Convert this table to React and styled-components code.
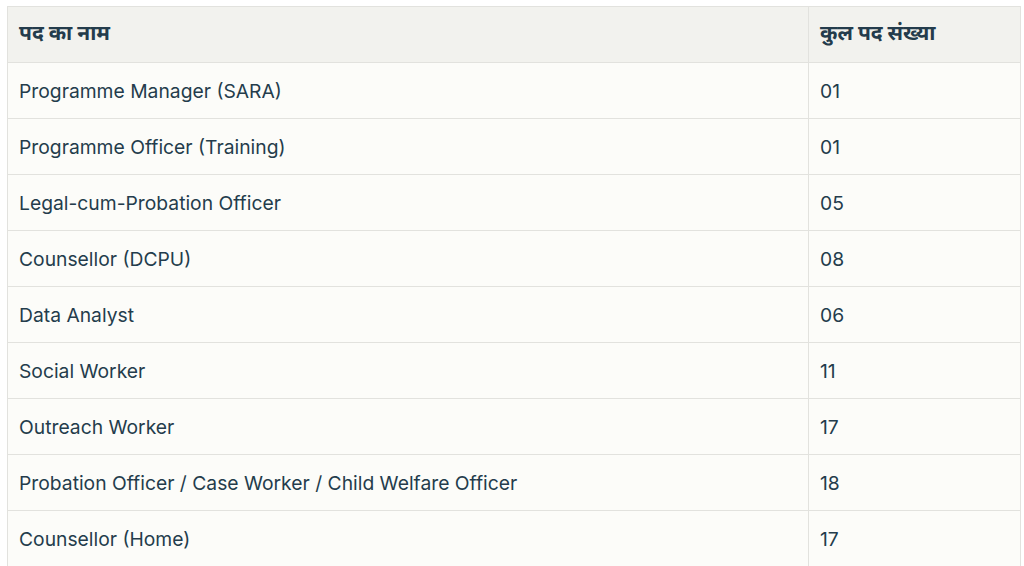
import styled, { createGlobalStyle } from "styled-components";

const GlobalStyle = createGlobalStyle`
  body {
    margin: 0;
    background: #ffffff;
  }
`;

const Wrapper = styled.div`
  padding: 6px 4px 0 7px;
`;

const Table = styled.table`
  width: 1013px;
  table-layout: fixed;
  border-collapse: collapse;
  font-family: Inter, "Noto Sans", "Liberation Sans", sans-serif;
  color: #243c4c;
  font-size: 19.3px;
`;

const HeadCell = styled.th`
  background: #f2f2ee;
  border: 1px solid #e2e2de;
  text-align: left;
  font-weight: 700;
  height: 52px;
  line-height: 26px;
  padding: 0 11px 3px;
  font-size: 21px;
`;

const Cell = styled.td`
  background: #fcfcf9;
  border: 1px solid #e2e2de;
  height: 55px;
  line-height: 24px;
  padding: 0 11px;
  font-weight: 400;
`;

const rows = [
  ["Programme Manager (SARA)", "01"],
  ["Programme Officer (Training)", "01"],
  ["Legal-cum-Probation Officer", "05"],
  ["Counsellor (DCPU)", "08"],
  ["Data Analyst", "06"],
  ["Social Worker", "11"],
  ["Outreach Worker", "17"],
  ["Probation Officer / Case Worker / Child Welfare Officer", "18"],
  ["Counsellor (Home)", "17"],
];

export default function App() {
  return (
    <>
      <GlobalStyle />
      <Wrapper>
        <Table>
          <colgroup>
            <col style={{ width: "801px" }} />
            <col style={{ width: "212px" }} />
          </colgroup>
          <thead>
            <tr>
              <HeadCell>पद का नाम</HeadCell>
              <HeadCell>कुल पद संख्या</HeadCell>
            </tr>
          </thead>
          <tbody>
            {rows.map(([name, count]) => (
              <tr key={name}>
                <Cell>{name}</Cell>
                <Cell>{count}</Cell>
              </tr>
            ))}
          </tbody>
        </Table>
      </Wrapper>
    </>
  );
}
